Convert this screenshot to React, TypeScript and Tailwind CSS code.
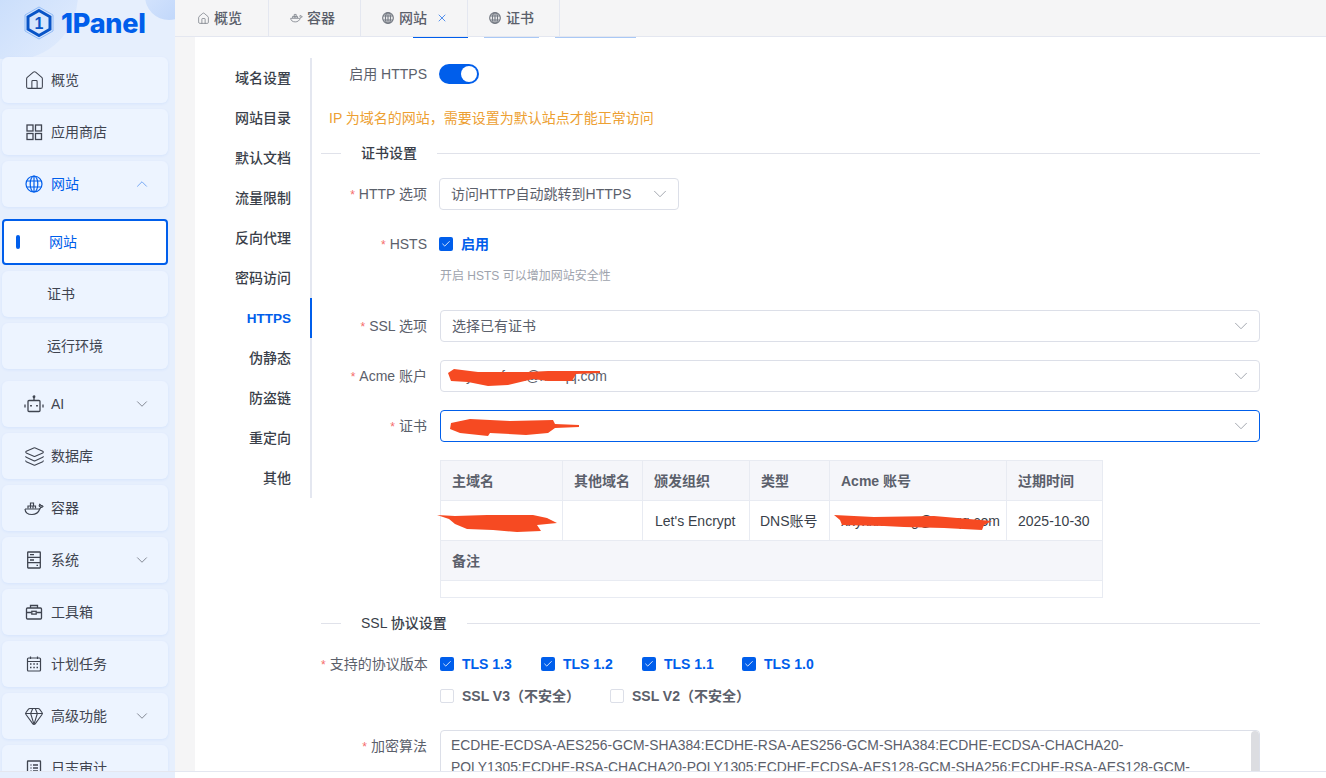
import { ReactNode } from "react";
import { Check, ChevronDown, ChevronUp, Gem, House, Layers, X } from "lucide-react";

const FONT = "font-['Liberation_Sans','Noto_Sans_CJK_SC',sans-serif]";

const DockerIcon = ({ className }: { className?: string }) => (
  <svg viewBox="0 0 20 14" fill="none" stroke="currentColor" strokeWidth="1.2" className={className}>
    <path d="M1 7.5h14c1 0 1.6-.8 1.8-1.8 .8.2 1.7 0 2.2-.7-.5-.7-1.3-.9-2-.7-.3-.9-.9-1.3-1.3-1.5-.6.8-.6 1.9 0 2.7" />
    <path d="M1 7.5c.2 3.2 2.8 5.5 7 5.5 3.8 0 6.5-2 7.8-5.5" />
    <path d="M4 7V4.500h7.500V7M6.500 4.500V1.500h3V4.500M6.500 4.500V7M9 4.500V7" />
  </svg>
);

const GlobeIcon = ({ className, strokeWidth = 1.2 }: { className?: string; strokeWidth?: number }) => (
  <svg viewBox="0 0 18 18" fill="none" stroke="currentColor" strokeWidth={strokeWidth} className={className}>
    <circle cx="9" cy="9" r="8" />
    <ellipse cx="9" cy="9" rx="3.800" ry="8" />
    <path d="M9 1v16M1.700 6h14.600M1.700 12h14.600" />
  </svg>
);

const GridIcon = ({ className }: { className?: string }) => (
  <svg viewBox="0 0 18 18" fill="none" stroke="currentColor" strokeWidth="1.3" className={className}>
    <rect x="2" y="2" width="6" height="6" />
    <rect x="10.500" y="2" width="6" height="6" />
    <rect x="2" y="10.500" width="6" height="6" />
    <rect x="10.500" y="10.500" width="6" height="6" />
  </svg>
);

const BotIcon = ({ className }: { className?: string }) => (
  <svg viewBox="0 0 20 18" fill="none" stroke="currentColor" strokeWidth="1.3" className={className}>
    <rect x="4" y="5.500" width="12" height="11" rx="1" />
    <path d="M10 5.500V2.500M1 9.500v3M19 9.500v3" />
    <circle cx="10" cy="1.800" r="0.800" fill="currentColor" />
    <path d="M7 10v1.500M13 10v1.500" strokeWidth="1.800" />
  </svg>
);

const ServerIcon = ({ className }: { className?: string }) => (
  <svg viewBox="0 0 18 18" fill="none" stroke="currentColor" strokeWidth="1.3" className={className}>
    <rect x="2.700" y="1" width="12.600" height="16" rx="0.5" />
    <path d="M2.700 6.300h12.600M2.700 11.600h12.600M5 3.700h4M5 9h4M11.500 14.300h1.500" />
  </svg>
);

const ToolboxIcon = ({ className }: { className?: string }) => (
  <svg viewBox="0 0 18 18" fill="none" stroke="currentColor" strokeWidth="1.3" className={className}>
    <rect x="1.500" y="5" width="15" height="11" rx="1" />
    <path d="M5.500 5V2.500h7V5M1.500 9.500h5M11.500 9.500h5" />
    <rect x="6.800" y="8.300" width="4.400" height="2.800" />
  </svg>
);

const CalendarIcon = ({ className }: { className?: string }) => (
  <svg viewBox="0 0 18 18" fill="none" stroke="currentColor" strokeWidth="1.200" className={className}>
    <rect x="2.500" y="3" width="13" height="13" rx="1" />
    <path d="M2.500 6.500h13M5.500 1.500V4M12.500 1.500V4" />
    <path d="M5 9h1.500M8.300 9h1.500M11.500 9h1.500M5 12.500h1.500M8.300 12.500h1.500M11.500 12.500h1.500" strokeWidth="1.500" />
  </svg>
);

const LogIcon = ({ className }: { className?: string }) => (
  <svg viewBox="0 0 18 18" fill="none" stroke="currentColor" strokeWidth="1.300" className={className}>
    <rect x="2.500" y="2" width="13" height="14" rx="0.5" />
    <path d="M5.500 6h1M8 6h5M5.500 9h1M8 9h5M5.500 12h1M8 12h5" />
  </svg>
);

const Logo = () => (
  <svg viewBox="0 0 30 34" className="w-[30px] h-[34px]" fill="none">
    <path d="M15 1 29 9v16l-14 8-14-8V9z" stroke="#7fb0f5" strokeWidth="0.8" />
    <path d="M15 4.500 26 10.800v12.400L15 29.500 4 23.200V10.800z" stroke="#0854c7" strokeWidth="3" />
    <text x="15" y="22.500" textAnchor="middle" fontSize="16" fontWeight="700" fill="#0854c7" fontFamily="Liberation Sans">1</text>
  </svg>
);

const NavItem = ({ icon, label, chevron, active }: { icon?: ReactNode; label: string; chevron?: "up" | "down"; active?: boolean }) => (
  <div
    className={`flex items-center h-[46px] shrink-0 rounded-md bg-[#edf4ff] shadow-[0_1px_3px_rgba(0,94,235,0.07)] text-sm ${
      active ? "text-[#005eeb]" : "text-[#3f4450]"
    } ${icon ? "pl-[23px]" : "pl-[45px]"}`}
  >
    {icon && <span className="w-[18px] h-[18px] mr-[8px] flex items-center justify-center shrink-0">{icon}</span>}
    <span className="flex-1">{label}</span>
    {chevron === "up" && <ChevronUp className="w-[18px] h-[18px] mr-[17px] text-[#4f8ff0]" strokeWidth={1} />}
    {chevron === "down" && <ChevronDown className="w-[18px] h-[18px] mr-[17px] text-[#5f6470]" strokeWidth={1} />}
  </div>
);

const Sidebar = () => (
  <aside className="relative w-[175px] shrink-0 bg-[#e6effd] overflow-hidden">
    <div className="absolute -left-[52px] -top-[70px] w-[130px] h-[130px] rounded-full bg-gradient-to-br from-[#b6d2fa] to-[#e3edfd]" />
    <div className="absolute -right-[18px] -top-[28px] w-[48px] h-[48px] rounded-full bg-gradient-to-br from-[#dbe8fd] to-[#bcd4fa]" />
    <div className="relative flex items-center h-[57px] pl-[24px] pb-[11px]">
      <Logo />
      <span className="ml-[7px] font-['Inter',sans-serif] font-extrabold text-[27px] leading-none tracking-[-0.2px] text-[#005eeb]">1Panel</span>
    </div>
    <div className="relative flex flex-col gap-[6px] ml-[2px] w-[166px]">
      <NavItem icon={<House className="w-[21px] h-[21px] shrink-0" strokeWidth={1.2} />} label="概览" />
      <NavItem icon={<GridIcon className="w-[18px] h-[18px]" />} label="应用商店" />
      <NavItem icon={<GlobeIcon className="w-[18px] h-[18px]" />} label="网站" chevron="up" active />
      <div className="flex items-center h-[46px] mt-[6px] shrink-0 rounded-[4px] bg-white border-2 border-[#005eeb] text-sm text-[#005eeb] pl-[12px]">
        <span className="w-[4px] h-[14px] rounded-full bg-[#005eeb] mr-[29px]" />
        <span>网站</span>
      </div>
      <NavItem label="证书" />
      <NavItem label="运行环境" />
      <div className="mt-[6px]">
        <NavItem icon={<BotIcon className="w-[20px] h-[18px] shrink-0" />} label="AI" chevron="down" />
      </div>
      <NavItem icon={<Layers className="w-[21px] h-[21px] shrink-0" strokeWidth={1.2} />} label="数据库" />
      <NavItem icon={<DockerIcon className="w-[20px] h-[15px] shrink-0" />} label="容器" />
      <NavItem icon={<ServerIcon className="w-[18px] h-[18px]" />} label="系统" chevron="down" />
      <NavItem icon={<ToolboxIcon className="w-[18px] h-[18px]" />} label="工具箱" />
      <NavItem icon={<CalendarIcon className="w-[18px] h-[18px]" />} label="计划任务" />
      <NavItem icon={<Gem className="w-[20px] h-[20px] shrink-0" strokeWidth={1.3} />} label="高级功能" chevron="down" />
      <NavItem icon={<LogIcon className="w-[18px] h-[18px]" />} label="日志审计" />
    </div>
  </aside>
);

const Tab = ({ icon, label, className, closable }: { icon: ReactNode; label: string; className: string; closable?: boolean }) => (
  <div className={`flex items-center border-r border-[#e4e7f0] text-sm font-medium text-[#5b606b] ${className}`}>
    <span className="w-[12px] h-[12px] flex items-center justify-center mr-[5px] text-[#777c85]">{icon}</span>
    <span>{label}</span>
    {closable && <X className="w-[12px] h-[12px] ml-[9px] text-[#1f6fe8]" strokeWidth={1.5} />}
  </div>
);

const sideTabs = ["域名设置", "网站目录", "默认文档", "流量限制", "反向代理", "密码访问", "HTTPS", "伪静态", "防盗链", "重定向", "其他"];

const SideTabs = () => (
  <div className="w-[117px] shrink-0 self-start">
    {sideTabs.map((t) => (
      <div
        key={t}
        className={`h-10 flex items-center justify-end pr-[19px] border-r-2 ${
          t === "HTTPS" ? "border-[#005eeb] text-[#005eeb] font-bold text-[13.5px] pt-[3px]" : "border-[#e4e7f0] text-[#3a3f4a] font-medium text-sm"
        }`}
      >
        {t}
      </div>
    ))}
  </div>
);

const Label = ({ text, required = true }: { text: string; required?: boolean }) => (
  <div className="w-[106px] shrink-0 text-right text-sm text-[#5b606b] whitespace-nowrap">
    {required && <span className="text-[#f56c6c] mr-[4px] text-xs">*</span>}
    {text}
  </div>
);

const Section = ({ title, className }: { title: string; className: string }) => (
  <div className={`flex items-center h-5 ${className}`}>
    <div className="w-5 h-px bg-[#e0e2ea]" />
    <span className="px-5 text-sm font-medium text-[#3a3f4a] whitespace-nowrap">{title}</span>
    <div className="flex-1 h-px bg-[#e0e2ea]" />
  </div>
);

const Select = ({ children, focused, className }: { children?: ReactNode; focused?: boolean; className: string }) => (
  <div
    className={`relative flex items-center justify-between h-8 rounded-[4px] border px-[11px] text-sm text-[#5b606b] ${
      focused ? "border-[#005eeb]" : "border-[#dcdfe8]"
    } ${className}`}
  >
    <span>{children}</span>
    <ChevronDown className="w-[22px] h-[22px] -mr-[4px] text-[#9da1aa]" strokeWidth={1} />
  </div>
);

const CheckItem = ({ label, checked = true, className }: { label: string; checked?: boolean; className?: string }) => (
  <div className={`flex items-center text-sm font-bold ${checked ? "text-[#005eeb]" : "text-[#5b606b]"} ${className ?? ""}`}>
    <span
      className={`w-[14px] h-[14px] rounded-[2px] flex items-center justify-center mr-[8px] ${
        checked ? "bg-[#005eeb]" : "bg-white border border-[#dcdfe8]"
      }`}
    >
      {checked && <Check className="w-[10px] h-[10px] text-white" strokeWidth={2} />}
    </span>
    {label}
  </div>
);

const CertTable = () => (
  <table className="ml-[119px] mt-[18px] w-[662px] table-fixed border-collapse text-sm text-[#3a3f4a]">
    <colgroup>
      <col className="w-[122px]" />
      <col className="w-[80px]" />
      <col className="w-[107px]" />
      <col className="w-[80px]" />
      <col className="w-[177px]" />
      <col className="w-[96px]" />
    </colgroup>
    <tbody>
      <tr className="h-10 bg-[#f5f6fa] text-[#5b606b] font-bold">
        {["主域名", "其他域名", "颁发组织", "类型", "Acme 账号", "过期时间"].map((h) => (
          <td key={h} className="border border-[#e8ebf2] px-[11px] whitespace-nowrap">{h}</td>
        ))}
      </tr>
      <tr className="h-10">
        <td className="relative border border-[#e8ebf2] px-[11px]">
          <svg viewBox="0 0 121 19" className="absolute -left-[4px] top-[13px] w-[121px] h-[19px]">
            <path fill="#f64a22" d="M0 1 18 2 50 1 96 1 110 4 120 9 100 11 104 17 80 18 56 16 30 15 18 10 12 5z" />
          </svg>
        </td>
        <td className="border border-[#e8ebf2] px-[11px]" />
        <td className="border border-[#e8ebf2] px-[12px] whitespace-nowrap">Let's Encrypt</td>
        <td className="border border-[#e8ebf2] px-[10px] whitespace-nowrap">DNS账号</td>
        <td className="relative border border-[#e8ebf2] px-[11px] whitespace-nowrap overflow-visible">
          xxyxxxxxxxg@xxxqq.com
          <svg viewBox="0 0 160 16" className="absolute left-[4px] top-[14px] w-[160px] h-[16px]">
            <path fill="#f64a22" d="M0 0 40 2 100 1 158 6 150 10 148 15 110 13 70 12 50 11 8 10 6 5z" />
          </svg>
        </td>
        <td className="border border-[#e8ebf2] px-[11px] whitespace-nowrap">2025-10-30</td>
      </tr>
      <tr className="h-10 bg-[#f5f6fa] text-[#5b606b] font-bold">
        <td colSpan={6} className="border border-[#e8ebf2] px-[11px]">备注</td>
      </tr>
      <tr className="h-[17px]">
        <td colSpan={6} className="border border-[#e8ebf2]" />
      </tr>
    </tbody>
  </table>
);

const HttpsForm = () => (
  <div className="w-[948px] pl-[9px] shrink-0">
    <div className="flex items-center h-8 gap-3">
      <Label text="启用 HTTPS" required={false} />
      <span className="flex items-center justify-end w-10 h-5 rounded-full bg-[#005eeb] pr-[2px]">
        <span className="w-4 h-4 rounded-full bg-white" />
      </span>
    </div>
    <div className="mt-[18px] h-5 leading-5 pl-[8px] text-sm text-[#eda032]">IP 为域名的网站，需要设置为默认站点才能正常访问</div>
    <Section title="证书设置" className="mt-[15px]" />
    <div className="flex items-center mt-[15px] gap-3">
      <Label text="HTTP 选项" />
      <Select className="w-[240px]">访问HTTP自动跳转到HTTPS</Select>
    </div>
    <div className="flex items-center h-8 mt-[18px] gap-3">
      <Label text="HSTS" />
      <CheckItem label="启用" />
    </div>
    <div className="mt-[6px] h-5 leading-5 ml-[119px] text-xs text-[#9ea3ad]">开启 HSTS 可以增加网站安全性</div>
    <div className="flex items-center mt-[24px] gap-3">
      <Label text="SSL 选项" />
      <Select className="flex-1 ml-px">选择已有证书</Select>
    </div>
    <div className="flex items-center mt-[18px] gap-3">
      <Label text="Acme 账户" />
      <Select className="flex-1 ml-px">
        xxyxxxxfxxx@xxxqq.com
        <svg viewBox="0 0 153 17" className="absolute left-[7px] top-[8px] w-[153px] h-[17px]">
          <path fill="#f64a22" d="M0 4 6 0 30 3 80 3 100 2 152 2 152 4 128 5 124 12 100 12 85 10 60 16 40 17 20 13 3 12z" />
        </svg>
      </Select>
    </div>
    <div className="flex items-center mt-[18px] gap-3">
      <Label text="证书" />
      <Select focused className="flex-1 ml-px">
        <svg viewBox="0 0 129 17" className="absolute left-[9px] top-[8px] w-[129px] h-[17px]">
          <path fill="#f64a22" d="M1 4 20 0 60 2 103 1 105 5 129 6 129 8 105 9 98 14 76 16 40 14 38 17 10 14 0 10z" />
        </svg>
      </Select>
    </div>
    <CertTable />
    <Section title="SSL 协议设置" className="mt-[15px]" />
    <div className="flex items-center h-8 mt-[15px] gap-3">
      <Label text="支持的协议版本" />
      <div className="flex items-center ml-px">
        <CheckItem label="TLS 1.3" className="w-[101px]" />
        <CheckItem label="TLS 1.2" className="w-[101px]" />
        <CheckItem label="TLS 1.1" className="w-[100px]" />
        <CheckItem label="TLS 1.0" />
      </div>
    </div>
    <div className="flex items-center h-8 ml-[119px]">
      <CheckItem label="SSL V3（不安全）" checked={false} className="w-[170px]" />
      <CheckItem label="SSL V2（不安全）" checked={false} />
    </div>
    <div className="flex items-start mt-[18px] gap-3">
      <div className="pt-[6px]">
        <Label text="加密算法" />
      </div>
      <div className="relative flex-1 ml-px h-[120px] rounded-[4px] border border-[#dcdfe8] pl-[10px] pt-[3px] text-[13.88px] leading-[22px] text-[#5b606b] whitespace-nowrap">
        <div>ECDHE-ECDSA-AES256-GCM-SHA384:ECDHE-RSA-AES256-GCM-SHA384:ECDHE-ECDSA-CHACHA20-</div>
        <div>POLY1305:ECDHE-RSA-CHACHA20-POLY1305:ECDHE-ECDSA-AES128-GCM-SHA256:ECDHE-RSA-AES128-GCM-</div>
        <div className="absolute right-0 top-0 w-[8px] h-[80px] rounded-full bg-[#dcdde1]" />
      </div>
    </div>
  </div>
);

export default function App() {
  return (
    <div className={`flex flex-col w-full h-screen overflow-hidden bg-white ${FONT}`}>
      <div className="flex flex-1 min-h-0">
        <Sidebar />
        <main className="flex flex-col flex-1 min-w-0 bg-[#f5f5f6]">
          <div className="flex h-[37px] shrink-0 border-b border-[#e4e7f0]">
            <Tab icon={<House className="w-[13px] h-[13px] shrink-0" strokeWidth={1.4} />} label="概览" className="w-[94px] pl-[22px]" />
            <Tab icon={<DockerIcon className="w-[13px] h-[10px] shrink-0" />} label="容器" className="w-[92px] pl-[21px]" />
            <Tab icon={<GlobeIcon className="w-[12px] h-[12px] shrink-0" strokeWidth={1.8} />} label="网站" className="w-[107px] pl-[21px]" closable />
            <Tab icon={<GlobeIcon className="w-[12px] h-[12px] shrink-0" strokeWidth={1.8} />} label="证书" className="w-[92px] pl-[21px]" />
          </div>
          <div className="flex flex-col flex-1 min-h-0 ml-[20px] bg-white overflow-hidden">
            <div className="flex h-px shrink-0 pl-[218px]">
              <div className="w-[55px] bg-[#005eeb]" />
              <div className="w-[55px] ml-[16px] bg-[#a9c8f5]" />
              <div className="w-[81px] ml-[16px] bg-[#a9c8f5]" />
            </div>
            <div className="flex pt-[20px]">
              <SideTabs />
              <HttpsForm />
            </div>
          </div>
        </main>
      </div>
      <div className="flex h-[7px] shrink-0 border-t border-[#e4e7f0]">
        <div className="w-[175px] bg-[#e6effd]" />
        <div className="flex-1 bg-white" />
      </div>
    </div>
  );
}
